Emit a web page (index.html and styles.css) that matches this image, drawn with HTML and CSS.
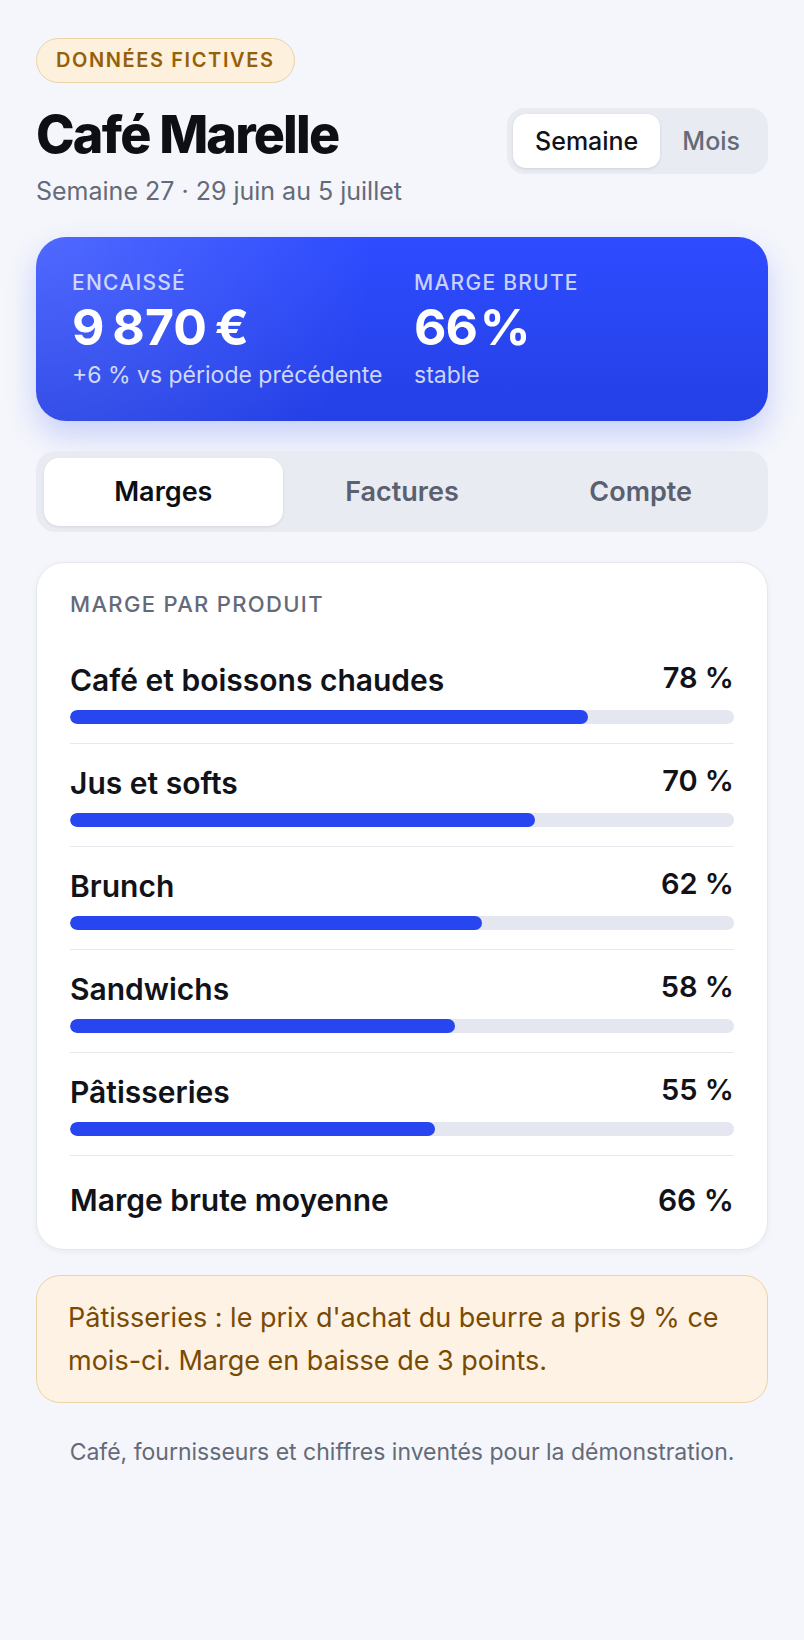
FILE: index.html
```html
<!DOCTYPE html>
<html lang="fr">

<head>
    <meta charset="UTF-8">
    <meta name="viewport" content="width=device-width, initial-scale=1.0">
    <title>Café Marelle · marges</title>
    <link rel="stylesheet" href="styles.css">
</head>

<body>
    <div class="page">
        <span class="badge">Données fictives</span>

        <div class="head">
            <div class="head-text">
                <h1 class="title">Café Marelle</h1>
                <p class="subtitle">Semaine 27 · 29 juin au 5 juillet</p>
            </div>
            <div class="period">
                <span class="period-btn active">Semaine</span>
                <span class="period-btn">Mois</span>
            </div>
        </div>

        <div class="summary">
            <div class="stat">
                <p class="stat-label">Encaissé</p>
                <p class="stat-value">9&#8239;870&#8239;€</p>
                <p class="stat-note">+6 % vs période précédente</p>
            </div>
            <div class="stat">
                <p class="stat-label">Marge brute</p>
                <p class="stat-value">66&#8202;%</p>
                <p class="stat-note">stable</p>
            </div>
        </div>

        <div class="tabs">
            <span class="tab active">Marges</span>
            <span class="tab">Factures</span>
            <span class="tab">Compte</span>
        </div>

        <div class="card">
            <p class="card-title">Marge par produit</p>
            <ul class="rows">
                <li class="row">
                    <div class="row-line">
                        <span class="row-name">Café et boissons chaudes</span>
                        <span class="row-pct">78 %</span>
                    </div>
                    <div class="bar"><div class="bar-fill" style="width: 78%"></div></div>
                </li>
                <li class="row">
                    <div class="row-line">
                        <span class="row-name">Jus et softs</span>
                        <span class="row-pct">70 %</span>
                    </div>
                    <div class="bar"><div class="bar-fill" style="width: 70%"></div></div>
                </li>
                <li class="row">
                    <div class="row-line">
                        <span class="row-name">Brunch</span>
                        <span class="row-pct">62 %</span>
                    </div>
                    <div class="bar"><div class="bar-fill" style="width: 62%"></div></div>
                </li>
                <li class="row">
                    <div class="row-line">
                        <span class="row-name">Sandwichs</span>
                        <span class="row-pct">58 %</span>
                    </div>
                    <div class="bar"><div class="bar-fill" style="width: 58%"></div></div>
                </li>
                <li class="row">
                    <div class="row-line">
                        <span class="row-name">Pâtisseries</span>
                        <span class="row-pct">55 %</span>
                    </div>
                    <div class="bar"><div class="bar-fill" style="width: 55%"></div></div>
                </li>
            </ul>
            <div class="total">
                <span>Marge brute moyenne</span>
                <span>66 %</span>
            </div>
        </div>

        <div class="alert">
            Pâtisseries : le prix d'achat du beurre a pris 9 % ce mois-ci. Marge en baisse de 3 points.
        </div>

        <p class="footnote">Café, fournisseurs et chiffres inventés pour la démonstration.</p>
    </div>
</body>

</html>
```

FILE: styles.css
```css
* {
    margin: 0;
    padding: 0;
    box-sizing: border-box;
}

ul>li {
    list-style: none;
}

body {
    background: #f4f6fb;
    font-family: Inter, "Noto Sans", sans-serif;
    color: #111318;
}

.page {
    padding: 38px 36px 60px;
}

/* ---------- en-tête ---------- */

.badge {
    display: inline-block;
    padding: 10px 19px;
    border: 1px solid #ecd3a4;
    border-radius: 999px;
    background: #fdf0dc;
    color: #95600a;
    font-size: 20px;
    font-weight: 600;
    letter-spacing: 0.08em;
    line-height: 23px;
    text-transform: uppercase;
}

.head {
    display: flex;
    justify-content: space-between;
    align-items: flex-start;
    margin-top: 21px;
}

.title {
    font-size: 52px;
    font-weight: 800;
    line-height: 1.2;
    letter-spacing: -0.035em;
    color: #0d0f14;
}

.subtitle {
    margin-top: 8px;
    font-size: 25px;
    line-height: 1.4;
    color: #646a78;
}

.period {
    display: flex;
    margin-top: 4px;
    padding: 6px;
    border-radius: 18px;
    background: #e8ebf1;
}

.period-btn {
    padding: 0 22px;
    height: 54px;
    line-height: 54px;
    border-radius: 13px;
    font-size: 25px;
    font-weight: 500;
    color: #646a78;
}

.period-btn.active {
    background: #fff;
    color: #111318;
    box-shadow: 0 1px 3px rgba(20, 30, 60, 0.12);
}

/* ---------- bloc bleu ---------- */

.summary {
    display: grid;
    grid-template-columns: 1fr 1fr;
    gap: 24px;
    margin-top: 28px;
    padding: 32px 36px 30px;
    border-radius: 30px;
    background: radial-gradient(circle at 0 0, rgba(255, 255, 255, 0.16), rgba(255, 255, 255, 0) 45%),
        linear-gradient(180deg, #2e4cff 0%, #2440e6 100%);
    box-shadow: 0 14px 30px rgba(45, 75, 245, 0.22);
    color: #fff;
}

.stat-label {
    font-size: 21px;
    font-weight: 500;
    line-height: 1.3;
    letter-spacing: 0.06em;
    text-transform: uppercase;
    color: rgba(255, 255, 255, 0.75);
}

.stat-value {
    margin-top: 3px;
    font-size: 50px;
    font-weight: 700;
    line-height: 1.1;
    letter-spacing: -0.02em;
}

.stat-note {
    margin-top: 4px;
    font-size: 23px;
    line-height: 1.4;
    color: rgba(255, 255, 255, 0.78);
    white-space: nowrap;
}

/* ---------- onglets ---------- */

.tabs {
    display: grid;
    grid-template-columns: repeat(3, 1fr);
    margin-top: 30px;
    padding: 7px 8px 6px;
    border-radius: 20px;
    background: #e8ebf1;
}

.tab {
    height: 68px;
    line-height: 68px;
    text-align: center;
    border-radius: 15px;
    font-size: 27px;
    font-weight: 600;
    color: #5b6070;
}

.tab.active {
    background: #fff;
    color: #0d0f14;
    box-shadow: 0 1px 3px rgba(20, 30, 60, 0.1);
}

/* ---------- carte marges ---------- */

.card {
    margin-top: 30px;
    padding: 27px 33px 30px;
    border: 1px solid #e4e7ee;
    border-radius: 28px;
    background: #fff;
    box-shadow: 0 2px 6px rgba(20, 30, 60, 0.05);
}

.card-title {
    margin-bottom: 23px;
    font-size: 22px;
    font-weight: 500;
    line-height: 1.3;
    letter-spacing: 0.06em;
    text-transform: uppercase;
    color: #646a78;
}

.row {
    padding: 20px 0 19px;
    border-bottom: 1px solid #e8e9ee;
}

.row-line {
    display: flex;
    justify-content: space-between;
    align-items: center;
}

.row-name {
    font-size: 30px;
    font-weight: 600;
    line-height: 38px;
}

.row-pct {
    font-size: 29px;
    font-weight: 600;
    line-height: 38px;
    margin-top: -4px;
}

.bar {
    height: 14px;
    margin-top: 11px;
    border-radius: 7px;
    background: #e4e7f0;
    overflow: hidden;
}

.bar-fill {
    height: 100%;
    border-radius: 7px;
    background: #2746f0;
}

.total {
    display: flex;
    justify-content: space-between;
    padding-top: 25px;
    font-size: 30px;
    font-weight: 600;
    line-height: 38px;
}

/* ---------- alerte et pied ---------- */

.alert {
    margin-top: 25px;
    padding: 20px 31px;
    border: 1px solid #ecd3a4;
    border-radius: 24px;
    background: #fdf2e3;
    color: #7a4a05;
    font-size: 27px;
    line-height: 43px;
}

.footnote {
    margin-top: 33px;
    text-align: center;
    font-size: 23px;
    line-height: 1.4;
    color: #646a78;
}
```
